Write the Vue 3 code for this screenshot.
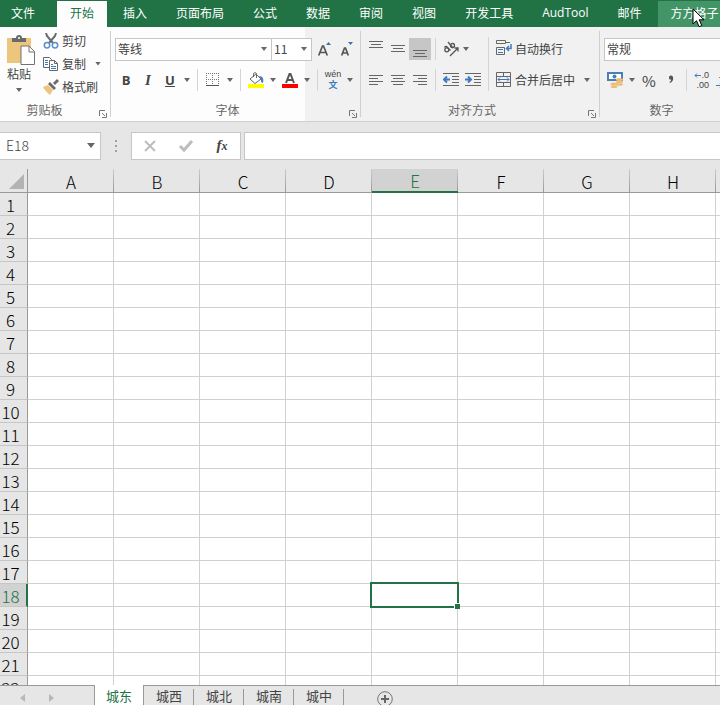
<template>
  <div class="workbook">
    <nav class="tabs">
      <button
        v-for="tab in tabs"
        :key="tab"
        class="tab"
        :class="{ file: tab === '文件', active: tab === activeTab, hovered: tab === hoveredTab }"
        @click="activeTab = tab"
      >
        {{ tab }}
        <svg v-if="tab === hoveredTab" class="pointer" viewBox="0 0 13 20">
          <path d="M1 1v15l3.5-3.3 2.6 6 2.7-1.2-2.6-5.7H12z" fill="#fff" stroke="#000" />
        </svg>
      </button>
    </nav>

    <div class="ribbon">
      <section class="group clipboard">
        <div class="group-body">
          <button class="paste">
            <svg class="paste-icon" viewBox="0 0 28 30">
              <path d="M0 3h24v25H0z" fill="#ebc67c" />
              <path d="M5 3h4a3 3 0 016 0h4v4H5z" fill="#6a6a6a" />
              <circle cx="12" cy="3" r="1" fill="#fff" />
              <path d="M14 11h8l5.500 5.500V29.500H14z" fill="#fff" stroke="#737373" />
              <path d="M22 11v6h5.500" fill="none" stroke="#737373" />
            </svg>
            <span>粘贴</span>
            <i class="caret"></i>
          </button>
          <div class="clip-list">
            <button class="clip-item">
              <svg class="icon" viewBox="0 0 16 16">
                <path d="M3 0l1 3 6 7M13 0l-1 3-6 7" fill="none" stroke="#6a6a6a" stroke-width="2" />
                <circle cx="4" cy="12.200" r="2.700" fill="none" stroke="#5b8fcb" stroke-width="1.500" />
                <circle cx="12" cy="12.200" r="2.700" fill="none" stroke="#5b8fcb" stroke-width="1.500" />
              </svg>
              剪切
            </button>
            <button class="clip-item">
              <svg class="icon" viewBox="0 0 16 16">
                <path d="M.5 1.500h6l2 2v8h-8z" fill="#fff" stroke="#666" />
                <path d="M2 4.500h3M2 6.500h3M2 8.500h3" stroke="#3f7abf" />
                <path d="M6.500 4.500h5l3 3v7h-8z" fill="#fff" stroke="#666" />
                <path d="M11.500 4.500v3h3" fill="none" stroke="#666" />
                <path d="M8 8.500h2M8 10.500h5M8 12.500h5" stroke="#3f7abf" />
              </svg>
              复制
              <i class="caret copy-caret"></i>
            </button>
            <button class="clip-item">
              <svg class="icon" viewBox="0 0 16 16">
                <path d="M0 8l5-2 5 5-3 5c-1-1-5-4-7-8z" fill="#ebc67c" />
                <path d="M5 5l2-2 6 6-2 2zM10 4l4-4 2 2-4 4z" fill="#6a6a6a" />
              </svg>
              格式刷
            </button>
          </div>
        </div>
        <div class="group-foot">
          <span class="group-name">剪贴板</span>
          <button class="launcher" aria-label="剪贴板设置"><svg viewBox="0 0 8 8"><path d="M.5 6V.5H6M3 3l3 3M7.500 3v4.500H3" /></svg></button>
        </div>
      </section>

      <section class="group font">
        <div class="group-body rows">
          <div class="row">
            <span class="combo font-name">
              <select v-model="fontName" aria-label="字体"><option>等线</option><option>宋体</option></select>
              <i class="caret"></i>
            </span>
            <span class="combo font-size">
              <select v-model="fontSize" aria-label="字号"><option>11</option><option>12</option></select>
              <i class="caret"></i>
            </span>
            <button class="tool grow" aria-label="增大字号">
              <svg class="icon" viewBox="0 0 16 16">
                <path d="M1.700 14.500L5.500 5h1l3.800 9.500M3.500 11.500h5" fill="none" stroke="#555" stroke-width="1.700" />
                <path d="M9 4h5l-2.500-3z" fill="#3f6fb0" />
              </svg>
            </button>
            <button class="tool" aria-label="减小字号">
              <svg class="icon" viewBox="0 0 16 16">
                <path d="M2.700 14.500L5.500 7h1l2.800 7.500M4 12h4" fill="none" stroke="#555" stroke-width="1.700" />
                <path d="M9 1h5l-2.500 3z" fill="#3f6fb0" />
              </svg>
            </button>
          </div>
          <div class="row">
            <button class="tool bold">B</button>
            <button class="tool italic">I</button>
            <button class="tool underline">U</button>
            <button class="drop" aria-label="下划线选项"><i class="caret"></i></button>
            <i class="sep"></i>
            <button class="tool" aria-label="边框">
              <svg class="icon" viewBox="0 0 16 16">
                <path d="M1.500 1v13M7.500 1v13M13.500 1v13M1 1.500h13M1 7.500h13" fill="none" stroke="#777" stroke-dasharray="1 1" />
                <path d="M1 13.500h13" stroke="#555" />
              </svg>
            </button>
            <button class="drop" aria-label="边框选项"><i class="caret"></i></button>
            <i class="sep"></i>
            <button class="tool" aria-label="填充颜色">
              <svg class="icon" viewBox="0 0 16 16">
                <path d="M2 7l6-5 5 5-6 4.500z" fill="#fff" stroke="#666" />
                <path d="M5.500 5V1.500Q7-.5 8.500 1.500V6" fill="none" stroke="#666" />
                <path d="M11 4c4 0 5 3 4 7l-2-1V7z" fill="#4a7fb5" />
                <path d="M0 12h16v4H0z" fill="#ff0" />
              </svg>
            </button>
            <button class="drop" aria-label="填充颜色选项"><i class="caret"></i></button>
            <button class="tool" aria-label="字体颜色">
              <svg class="icon" viewBox="0 0 16 16">
                <path d="M4 11L7.500 2h1L12 11M5 8h6" fill="none" stroke="#555" stroke-width="2" />
                <path d="M0 12h16v4H0z" fill="#f00" />
              </svg>
            </button>
            <button class="drop" aria-label="字体颜色选项"><i class="caret"></i></button>
            <i class="sep"></i>
            <button class="tool phonetic"><span>wén</span><b>文</b></button>
            <button class="drop" aria-label="拼音选项"><i class="caret"></i></button>
          </div>
        </div>
        <div class="group-foot">
          <span class="group-name">字体</span>
          <button class="launcher" aria-label="字体设置"><svg viewBox="0 0 8 8"><path d="M.5 6V.5H6M3 3l3 3M7.500 3v4.500H3" /></svg></button>
        </div>
      </section>

      <section class="group align">
        <div class="group-body">
          <div class="rows align-tools">
            <div class="row">
              <button v-for="a in vertical" :key="a.name" class="tool" :class="{ pressed: a.name === '底端对齐' }" :aria-label="a.name">
                <svg class="icon" viewBox="0 0 16 16"><path :d="a.path" class="line" /></svg>
              </button>
              <i class="sep"></i>
              <button class="tool" aria-label="方向">
                <svg class="icon" viewBox="0 0 16 16">
                  <g fill="none" stroke="#555" stroke-width="1.300">
                    <circle cx="3.800" cy="8.800" r="2" />
                    <path d="M1.500 6.500q1.500-2 3 0l3 3" />
                    <path d="M5 1l5 6" />
                    <circle cx="9.500" cy="4.500" r="2" />
                    <path d="M7 15l8-8M11.500 7H15v3.500" />
                  </g>
                </svg>
              </button>
              <button class="drop near" aria-label="方向选项"><i class="caret"></i></button>
            </div>
            <div class="row">
              <button v-for="a in horizontal" :key="a.name" class="tool" :aria-label="a.name">
                <svg class="icon" viewBox="0 0 16 16"><path :d="a.path" class="line" /></svg>
              </button>
              <i class="sep"></i>
              <button class="tool" aria-label="减少缩进量">
                <svg class="icon" viewBox="0 0 16 16">
                  <path d="M0 1.500h16M9 4.500h7M9 7.500h7M9 10.500h7M0 13.500h16" class="line" />
                  <path d="M7 7.500H1M4 4.500l-3 3 3 3" fill="none" stroke="#3f7abf" stroke-width="2" />
                </svg>
              </button>
              <button class="tool" aria-label="增加缩进量">
                <svg class="icon" viewBox="0 0 16 16">
                  <path d="M0 1.500h16M9 4.500h7M9 7.500h7M9 10.500h7M0 13.500h16" class="line" />
                  <path d="M0 7.500h6M3 4.500l3 3-3 3" fill="none" stroke="#3f7abf" stroke-width="2" />
                </svg>
              </button>
            </div>
          </div>
          <i class="sep tall"></i>
          <div class="rows wrap-tools">
            <div class="row">
              <button class="labelled">
                <svg class="icon" viewBox="0 0 16 16">
                  <path d="M.5.500h9v3h-9zM.5 7.500h8v7h-8zM9 2.500h5" fill="none" stroke="#666" />
                  <path d="M2 9.500h5M2 12.500h5" stroke="#3f7abf" />
                  <path d="M15 4v4.500h-4M13 6l-2.500 2.500L13 11" fill="none" stroke="#3f7abf" stroke-width="1.500" />
                </svg>
                自动换行
              </button>
            </div>
            <div class="row">
              <button class="labelled">
                <svg class="icon" viewBox="0 0 16 16">
                  <path d="M.5 1.500h14v14H.5zM.5 5.500h14M.5 11.500h14M7.500 1.500v4M7.500 11.500v4" fill="none" stroke="#666" />
                  <path d="M2 8.500h11M4 6.500l-2 2 2 2M11 6.500l2 2-2 2" fill="none" stroke="#3f7abf" />
                </svg>
                合并后居中
              </button>
              <button class="drop merge-drop" aria-label="合并选项"><i class="caret"></i></button>
            </div>
          </div>
        </div>
        <div class="group-foot">
          <span class="group-name">对齐方式</span>
          <button class="launcher" aria-label="对齐设置"><svg viewBox="0 0 8 8"><path d="M.5 6V.5H6M3 3l3 3M7.500 3v4.500H3" /></svg></button>
        </div>
      </section>

      <section class="group number">
        <div class="group-body rows">
          <div class="row">
            <span class="combo number-format">
              <select v-model="numberFormat" aria-label="数字格式"><option>常规</option><option>数值</option></select>
              <i class="caret"></i>
            </span>
          </div>
          <div class="row">
            <button class="tool" aria-label="会计数字格式">
              <svg class="icon" viewBox="0 0 16 16">
                <path d="M1 1h14v7H1z" fill="#fff" stroke="#4a7fb5" stroke-width="2" />
                <circle cx="7.500" cy="4.500" r="2" fill="#4a7fb5" />
                <ellipse cx="12.500" cy="7.500" rx="3.500" ry="1.500" fill="#ebbd78" />
                <ellipse cx="12.500" cy="10" rx="3.500" ry="1.300" fill="#ebbd78" />
                <ellipse cx="12.500" cy="12.500" rx="3.500" ry="1.300" fill="#ebbd78" />
                <ellipse cx="7" cy="12" rx="3.500" ry="1.500" fill="#ebbd78" />
                <ellipse cx="7" cy="14.700" rx="3.500" ry="1.300" fill="#ebbd78" />
              </svg>
            </button>
            <button class="drop" aria-label="会计格式选项"><i class="caret"></i></button>
            <button class="tool percent">%</button>
            <button class="tool comma" aria-label="千位分隔样式">
              <svg class="icon" viewBox="0 0 16 16"><path d="M6 6a2 2 0 014-1q1 4-3 6l-.5-1q2-1 1.500-2.500Q6 8 6 6z" fill="#555" /></svg>
            </button>
            <i class="sep"></i>
            <button class="tool decimals">
              <span><svg viewBox="0 0 7 5"><path d="M7 2.500H1M3 .5l-2 2 2 2" /></svg>.0</span>
              <span>.00</span>
            </button>
            <button class="tool decimals">
              <span>.00</span>
              <span><svg viewBox="0 0 7 5"><path d="M0 2.500h6M4 .5l2 2-2 2" /></svg>.0</span>
            </button>
          </div>
        </div>
        <div class="group-foot">
          <span class="group-name">数字</span>
          <button class="launcher" aria-label="数字设置"><svg viewBox="0 0 8 8"><path d="M.5 6V.5H6M3 3l3 3M7.500 3v4.500H3" /></svg></button>
        </div>
      </section>
    </div>

    <div class="formula-bar">
      <div class="name-box">
        <input v-model="cellName" aria-label="名称框" />
        <button class="drop" aria-label="名称列表"><i class="caret large"></i></button>
      </div>
      <svg class="dots" viewBox="0 0 2 12"><path d="M0 0h2v2H0zM0 5h2v2H0zM0 10h2v2H0z" fill="#a0a0a0" /></svg>
      <div class="formula-actions">
        <button aria-label="取消"><svg class="icon" viewBox="0 0 16 16"><path d="M3 3l10 10M13 3L3 13" fill="none" stroke="#bdbdbd" stroke-width="2" /></svg></button>
        <button aria-label="输入"><svg class="icon" viewBox="0 0 16 16"><path d="M2 8l4 4 8-9" fill="none" stroke="#bdbdbd" stroke-width="3" /></svg></button>
        <button class="fx">f<sub>x</sub></button>
      </div>
      <input v-model="formula" class="formula" aria-label="编辑栏" />
    </div>

    <main class="sheet">
      <table>
        <thead>
          <tr>
            <th class="corner"><svg viewBox="0 0 15 15"><path d="M15 0v15H0z" fill="#b3b3b3" /></svg></th>
            <th v-for="col in columns" :key="col" class="col-head" :class="{ current: col === 'E' }">{{ col }}</th>
          </tr>
        </thead>
        <tbody>
          <tr v-for="n in 22" :key="n">
            <th class="row-head" :class="{ current: n === 18 }">{{ n }}</th>
            <td v-for="col in columns" :key="col" :class="{ selected: col + n === 'E18' }"></td>
          </tr>
        </tbody>
      </table>
    </main>

    <footer class="sheet-bar">
      <div class="sheet-nav">
        <button aria-label="上一个"><svg viewBox="0 0 5 8"><path d="M5 0v8L0 4z" /></svg></button>
        <button aria-label="下一个"><svg viewBox="0 0 5 8"><path d="M0 0v8l5-4z" /></svg></button>
      </div>
      <button
        v-for="name in sheets"
        :key="name"
        class="sheet-tab"
        :class="{ active: name === activeSheet }"
        @click="activeSheet = name"
      >{{ name }}</button>
      <button class="add" aria-label="新工作表">
        <svg viewBox="0 0 16 16"><circle cx="8" cy="8" r="7.300" fill="none" stroke="#777" /><path d="M8 4v8M4 8h8" stroke="#666" stroke-width="2" /></svg>
      </button>
    </footer>
  </div>
</template>

<script setup>
import { ref } from 'vue';

const tabs = ['文件', '开始', '插入', '页面布局', '公式', '数据', '审阅', '视图', '开发工具', 'AudTool', '邮件', '方方格子'];
const activeTab = ref('开始');
const hoveredTab = '方方格子';

const fontName = ref('等线');
const fontSize = ref('11');
const numberFormat = ref('常规');
const cellName = ref('E18');
const formula = ref('');

const vertical = [
  { name: '顶端对齐', path: 'M1 .5h14M3 3.500h10M1 6.500h14' },
  { name: '垂直居中', path: 'M1 4.500h14M3 7.500h10M1 10.500h14' },
  { name: '底端对齐', path: 'M1 9.500h14M3 12.500h10M1 15.500h14' },
];
const horizontal = [
  { name: '左对齐', path: 'M1 3.500h14M1 6.500h9M1 9.500h14M1 12.500h9' },
  { name: '居中', path: 'M1 3.500h14M3 6.500h10M1 9.500h14M3 12.500h10' },
  { name: '右对齐', path: 'M1 3.500h14M6 6.500h9M1 9.500h14M6 12.500h9' },
];

const columns = ['A', 'B', 'C', 'D', 'E', 'F', 'G', 'H', 'I'];
const sheets = ['城东', '城西', '城北', '城南', '城中'];
const activeSheet = ref('城东');
</script>

<style>
body {
  margin: 0;
}
</style>

<style scoped>
.workbook {
  display: flex;
  flex-direction: column;
  height: 100vh;
  overflow: hidden;
  background: #e6e6e6;
  color: #444;
  font-family: "Noto Sans CJK SC", sans-serif;
  font-size: 12px;
}

.workbook * {
  box-sizing: border-box;
}

button, input, select {
  margin: 0;
  padding: 0;
  border: 0;
  border-radius: 0;
  background: none;
  color: inherit;
  font: inherit;
  white-space: nowrap;
}

svg {
  display: block;
  flex-shrink: 0;
}

.icon {
  width: 16px;
  height: 16px;
}

.line {
  fill: none;
  stroke: #666;
}

.caret {
  width: 6px;
  height: 4px;
  flex-shrink: 0;
  background: #666;
  clip-path: polygon(0 0, 100% 0, 50% 100%);
}

.caret.large {
  width: 8px;
  height: 5px;
}

/* tabs */
.tabs {
  display: flex;
  gap: 3px;
  flex-shrink: 0;
  height: 27px;
  padding-top: 1px;
  overflow: hidden;
  background: #217346;
}

.tab {
  position: relative;
  flex-shrink: 0;
  padding: 0 13px 3px;
  color: #fff;
  font-family: "Open Sans", "Noto Sans CJK SC", sans-serif;
}

.tab.file {
  padding-left: 11px;
  padding-right: 19px;
}

.tab.active {
  background: #fdfdfd;
  color: #217346;
}

.tab.hovered {
  background: #439467;
}

.pointer {
  position: absolute;
  left: 34px;
  top: 7px;
  width: 13px;
  height: 20px;
}

/* ribbon */
.ribbon {
  display: flex;
  flex-shrink: 0;
  height: 95px;
  overflow: hidden;
  border-bottom: 1px solid #cfcfcf;
  background: #f1f1f1;
}

.group {
  position: relative;
  display: flex;
  flex-direction: column;
  flex-shrink: 0;
}

.group::after {
  content: "";
  position: absolute;
  top: 4px;
  right: 0;
  bottom: 4px;
  width: 1px;
  background: #d0d0d0;
}

.clipboard {
  width: 111px;
  background: #fdfdfd;
}

.font {
  width: 250px;
  background: linear-gradient(to right, #fdfdfd 194px, #f1f1f1 194px);
}

.align {
  width: 239px;
}

.number {
  width: 140px;
}

.group-body {
  display: flex;
  height: 74px;
}

.rows {
  display: flex;
  flex-direction: column;
  gap: 9px;
  padding: 11px 0 0 4px;
}

.row {
  display: flex;
  align-items: center;
  height: 22px;
}

.group-foot {
  display: flex;
  height: 20px;
  color: #666;
  line-height: 18px;
}

.group-name {
  flex: 1;
  text-align: center;
}

.clipboard .group-name {
  padding-right: 5px;
}

.launcher {
  display: flex;
  justify-content: flex-end;
  width: 17px;
  padding: 9px 4px 0 0;
}

.launcher svg {
  width: 8px;
  height: 8px;
  fill: none;
  stroke: #777;
}

.paste {
  display: flex;
  flex-direction: column;
  align-items: center;
  width: 43px;
  padding: 8px 5px 0 0;
  line-height: 18px;
}

.paste-icon {
  width: 28px;
  height: 30px;
  margin-left: 4px;
}

.paste .caret {
  margin-top: 5px;
}

.clip-list {
  padding-top: 3px;
}

.clip-item {
  display: flex;
  align-items: center;
  gap: 3px;
  height: 23px;
  padding-bottom: 2px;
}

.copy-caret {
  margin-left: 6px;
}

.combo {
  display: grid;
  align-items: center;
  height: 23px;
  border: 1px solid #c6c6c6;
  background: #fff;
}

.combo select,
.combo .caret {
  grid-area: 1 / 1;
}

.combo select {
  width: 100%;
  height: 21px;
  padding: 0 0 2px 2px;
  appearance: none;
}

.combo .caret {
  justify-self: end;
  margin-right: 4px;
  pointer-events: none;
}

.font-name {
  width: 157px;
}

.font-size {
  width: 40px;
  border-left: 0;
}

.number-format {
  width: 130px;
}

.tool {
  display: flex;
  align-items: center;
  justify-content: center;
  flex-shrink: 0;
  width: 22px;
  height: 22px;
}

.tool.pressed {
  background: #c6c6c6;
}

.tool.grow {
  margin-left: 2px;
}

.drop {
  display: flex;
  align-items: center;
  justify-content: center;
  width: 12px;
  height: 22px;
}

.drop.near {
  width: 8px;
}

.sep {
  width: 1px;
  height: 22px;
  margin: 0 4px;
  background: #d4d4d4;
}

.sep.tall {
  height: 54px;
  margin-top: 10px;
}

.bold, .italic, .underline {
  font-family: "Open Sans", sans-serif;
  font-size: 13px;
  font-weight: 700;
}

.italic {
  font-family: "Liberation Serif", serif;
  font-size: 15px;
  font-style: italic;
}

.underline {
  text-decoration: underline;
}

.phonetic {
  flex-direction: column;
  font-family: "Liberation Sans", "Noto Sans CJK SC", sans-serif;
  font-size: 9px;
  line-height: 11px;
}

.phonetic b {
  color: #3f7abf;
  font-weight: 700;
}

.wrap-tools {
  padding-left: 3px;
}

.labelled {
  display: flex;
  align-items: center;
  gap: 3px;
  padding-bottom: 2px;
}

.merge-drop {
  margin-left: 6px;
}

.percent {
  font-size: 15px;
}

.decimals {
  flex-direction: column;
  align-items: flex-end;
  padding-right: 4px;
  font-family: "Liberation Sans", sans-serif;
  font-size: 9px;
  line-height: 10px;
}

.decimals span {
  display: flex;
  align-items: center;
}

.decimals svg {
  width: 7px;
  height: 5px;
  fill: none;
  stroke: #3f7abf;
}

/* formula bar */
.formula-bar {
  display: flex;
  align-items: center;
  flex-shrink: 0;
  height: 47px;
}

.name-box, .formula-actions, .formula {
  height: 28px;
  border: 1px solid #c6c6c6;
  background: #fff;
}

.name-box {
  display: flex;
  align-items: center;
  width: 101px;
  padding-right: 3px;
  border-left: 0;
}

.name-box input {
  flex: 1;
  min-width: 0;
  padding: 0 0 2px 6px;
  font-size: 14px;
  font-weight: 300;
}

.dots {
  width: 2px;
  height: 12px;
  margin: 0 14px;
}

.formula-actions {
  display: flex;
  width: 110px;
}

.formula-actions button {
  display: flex;
  flex: 1;
  align-items: center;
  justify-content: center;
}

.formula-actions .fx {
  font: italic 700 15px "Liberation Serif", serif;
}

.fx sub {
  font-size: 12px;
  line-height: 12px;
}

.formula {
  flex: 1;
  min-width: 0;
  margin-left: 3px;
  padding-left: 6px;
  border-right: 0;
  font-size: 14px;
}

/* sheet */
.sheet {
  flex: 1;
  min-height: 0;
  overflow: hidden;
}

table {
  width: 802px;
  table-layout: fixed;
  border-spacing: 0;
}

th, td {
  height: 23px;
  padding: 0;
}

th {
  padding-top: 2px;
  background: #e6e6e6;
  color: #000;
  font-size: 17px;
  font-weight: 300;
  line-height: 20px;
}

.corner {
  width: 28px;
  height: 24px;
  padding-top: 0;
  border-right: 1px solid #999;
  border-bottom: 1px solid #999;
}

.corner svg {
  width: 15px;
  height: 15px;
  margin: 2px 0 0 9px;
}

.col-head {
  width: 86px;
  border-bottom: 1px solid #999;
  background: linear-gradient(#ccc, #999) right / 1px 100% no-repeat #e6e6e6;
}

.col-head.current {
  border-bottom: 2px solid #217346;
  background-color: #d2d2d2;
  color: #217346;
}

.row-head {
  padding-right: 6px;
  border-right: 1px solid #999;
  border-bottom: 1px solid #c6c6c6;
}

.row-head.current {
  border-right: 2px solid #217346;
  padding-right: 5px;
  background: #d2d2d2;
  color: #217346;
}

td {
  position: relative;
  border-right: 1px solid #d0d0d0;
  border-bottom: 1px solid #d0d0d0;
  background: #fff;
}

.selected::before {
  content: "";
  position: absolute;
  z-index: 1;
  inset: -2px;
  border: 2px solid #217346;
}

.selected::after {
  content: "";
  position: absolute;
  z-index: 2;
  right: -3px;
  bottom: -3px;
  width: 5px;
  height: 5px;
  border: 1px solid #fff;
  border-right: 0;
  border-bottom: 0;
  box-sizing: content-box;
  background: #217346;
}

/* sheet tabs */
.sheet-bar {
  display: flex;
  flex-shrink: 0;
  height: 20px;
  overflow: hidden;
  background: linear-gradient(#999, #999) top / 100% 1px no-repeat #e6e6e6;
}

.sheet-nav {
  display: flex;
  gap: 24px;
  width: 94px;
  height: 26px;
  padding-left: 20px;
}

.sheet-nav svg {
  width: 5px;
  height: 8px;
  fill: #b8b8b8;
}

.sheet-tab {
  position: relative;
  width: 50px;
  height: 22px;
  font-size: 13px;
  line-height: 20px;
}

.sheet-tab::after {
  content: "";
  position: absolute;
  top: 4px;
  right: 0;
  bottom: 0;
  width: 1px;
  background: #999;
}

.sheet-tab.active {
  border: 1px solid #999;
  border-top: 0;
  background: #fff;
  color: #217346;
}

.sheet-tab.active::after {
  display: none;
}

.add {
  height: 28px;
  margin-left: 33px;
}

.add svg {
  width: 16px;
  height: 16px;
}
</style>
